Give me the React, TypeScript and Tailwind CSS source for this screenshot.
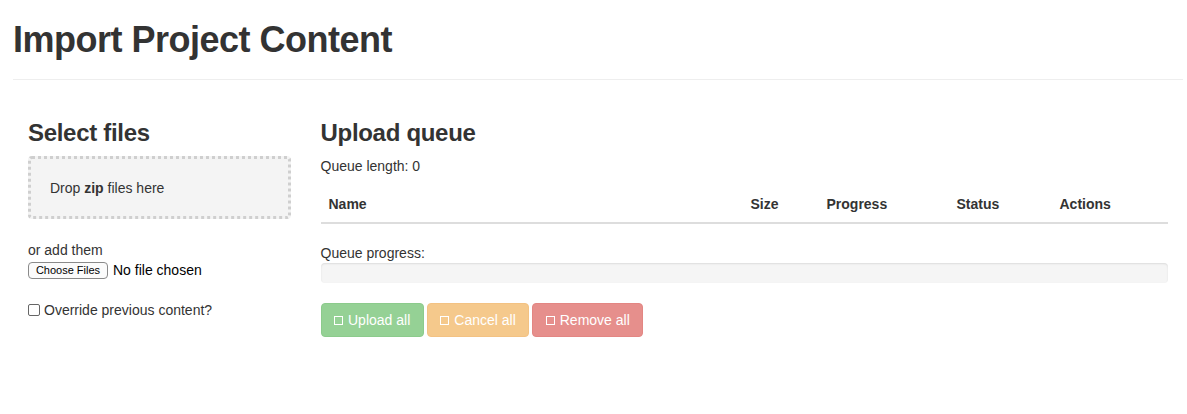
import React from "react";

function Glyph() {
  return <span className="inline-block w-[9px] h-[9px] border border-white mr-[5px] align-[-1px]" />;
}

export default function App() {
  return (
    <div className="min-h-[414px] bg-white text-[#333] text-[14px] leading-[20px] [font-family:'Liberation_Sans',Arial,sans-serif]">
      <div className="ml-[13px] w-[1170px] pt-[20px]">
        <div className="pb-[19px] border-b border-[#eee] mb-[20px]">
          <h1 className="text-[36px] leading-[39.6px] font-bold tracking-[-0.5px]">Import Project Content</h1>
        </div>
        <div className="flex">
          <div className="w-[292.5px] px-[15px] shrink-0">
            <h3 className="mt-[20px] mb-[10px] text-[24px] leading-[26.4px] font-bold tracking-[-0.3px]">Select files</h3>
            <div className="h-[63px] flex items-center px-[19px] bg-[#f4f4f4] border-[3px] border-dotted border-[#cfcfcf] rounded-[4px]">
              <span>
                Drop <b>zip</b> files here
              </span>
            </div>
            <div className="mt-[21px]">or add them</div>
            <div className="flex items-center h-[20px]">
              <span className="h-[17px] w-[80px] flex items-center justify-center text-[11px] leading-none text-black bg-[#fbfbfb] border border-[#8a8a8a] rounded-[4px]">
                Choose Files
              </span>
              <span className="ml-[5px] text-black">No file chosen</span>
            </div>
            <div className="mt-[20px] flex items-center h-[20px]">
              <span className="w-[12px] h-[12px] border border-[#666] rounded-[2px] bg-white mr-[4px]" />
              <span>Override previous content?</span>
            </div>
          </div>
          <div className="flex-1 px-[15px]">
            <h3 className="mt-[20px] mb-[10px] text-[24px] leading-[26.4px] font-bold tracking-[-0.3px]">Upload queue</h3>
            <p className="mb-[10px]">Queue length: 0</p>
            <table className="w-full mb-[19px] border-collapse">
              <thead>
                <tr className="border-b-2 border-[#ddd] text-left">
                  <th className="w-[422px] p-[8px] font-bold">Name</th>
                  <th className="w-[76px] p-[8px] font-bold">Size</th>
                  <th className="w-[130px] p-[8px] font-bold">Progress</th>
                  <th className="w-[103px] p-[8px] font-bold">Status</th>
                  <th className="p-[8px] font-bold">Actions</th>
                </tr>
              </thead>
              <tbody />
            </table>
            <div>Queue progress:</div>
            <div className="h-[20px] mb-[20px] bg-[#f5f5f5] rounded-[4px] shadow-[inset_0_1px_2px_rgba(0,0,0,0.1)]" />
            <div className="flex gap-[3px]">
              <span className="h-[34px] px-[12.5px] flex items-center text-white bg-[#95d195] border border-[#8ccb8c] rounded-[4px]">
                <Glyph />Upload all
              </span>
              <span className="h-[34px] px-[12.5px] flex items-center text-white bg-[#f5c98c] border border-[#f3c283] rounded-[4px]">
                <Glyph />Cancel all
              </span>
              <span className="h-[34px] px-[12.5px] flex items-center text-white bg-[#e68f8c] border border-[#e38683] rounded-[4px]">
                <Glyph />Remove all
              </span>
            </div>
          </div>
        </div>
      </div>
    </div>
  );
}
